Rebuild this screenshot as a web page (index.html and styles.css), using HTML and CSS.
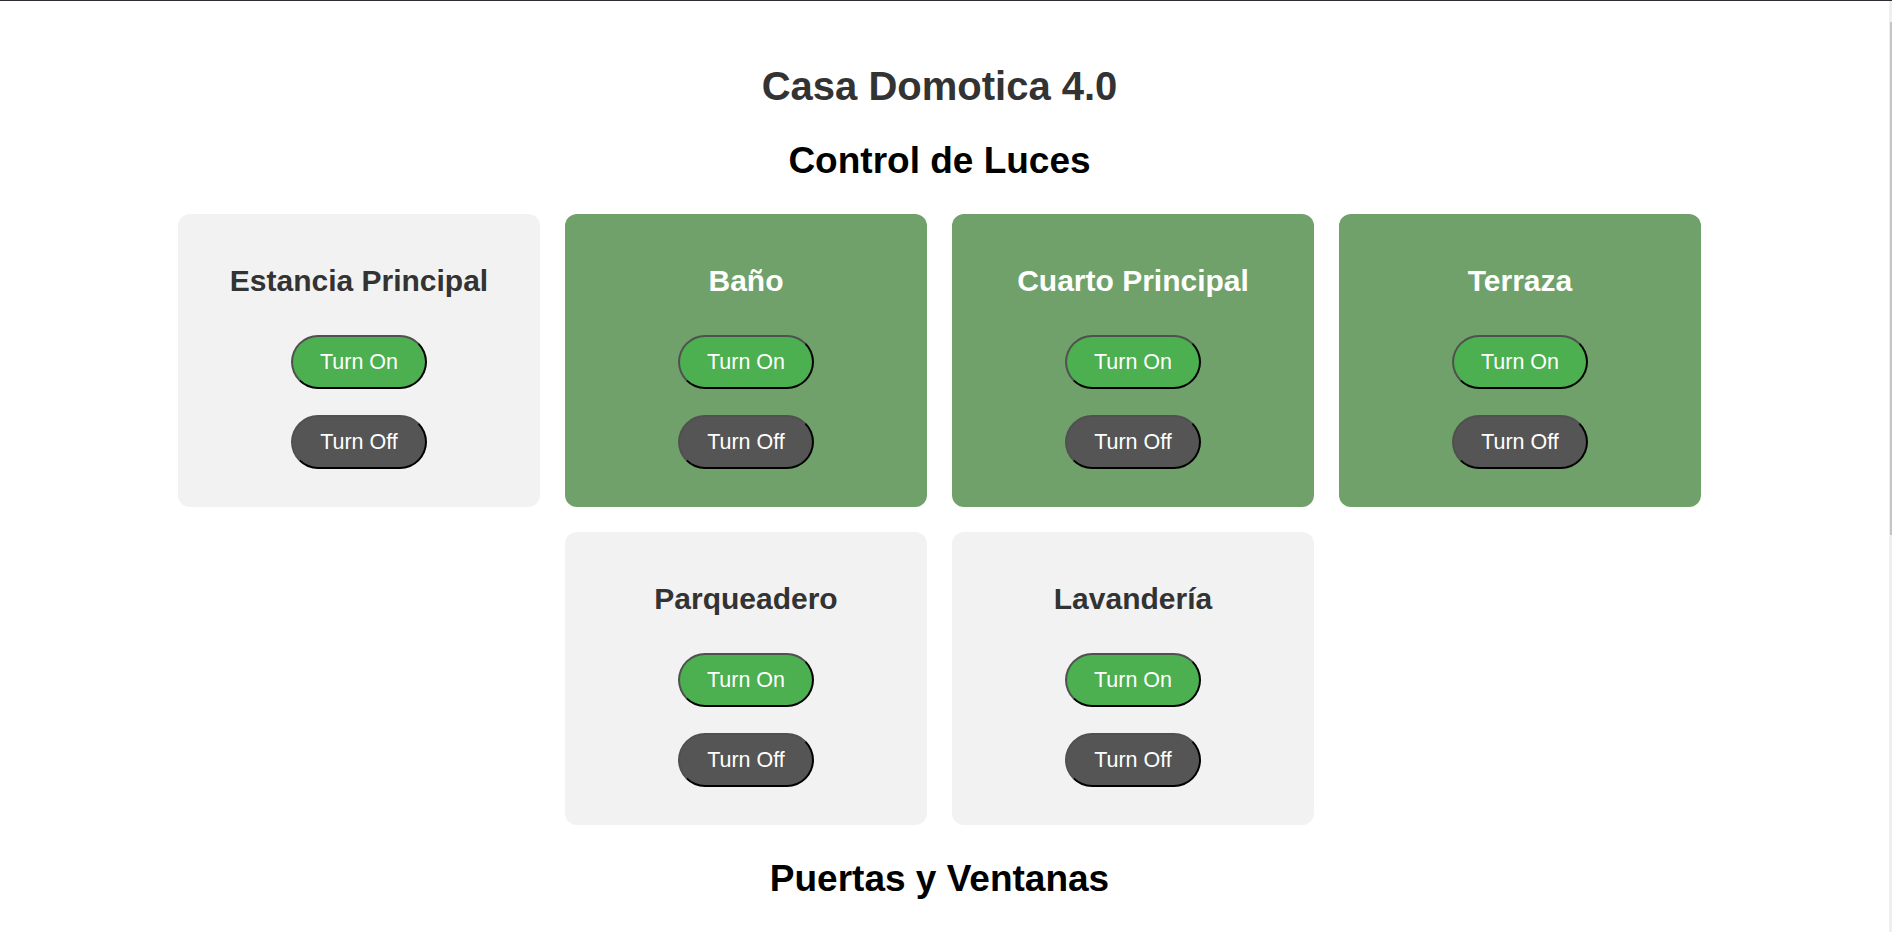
FILE: index.html
```html
<!DOCTYPE html>
<html lang="es">
<head>
<meta charset="utf-8">
<title>Casa Domotica 4.0</title>
<link rel="stylesheet" href="styles.css">
</head>
<body>
<main class="page">
  <h1 class="title">Casa Domotica 4.0</h1>

  <section class="section">
    <h2 class="section-title">Control de Luces</h2>
    <div class="cards">
      <div class="card">
        <h3 class="card-title">Estancia Principal</h3>
        <div class="actions">
          <button class="btn btn-on">Turn On</button>
          <button class="btn btn-off">Turn Off</button>
        </div>
      </div>
      <div class="card card-active">
        <h3 class="card-title">Baño</h3>
        <div class="actions">
          <button class="btn btn-on">Turn On</button>
          <button class="btn btn-off">Turn Off</button>
        </div>
      </div>
      <div class="card card-active">
        <h3 class="card-title">Cuarto Principal</h3>
        <div class="actions">
          <button class="btn btn-on">Turn On</button>
          <button class="btn btn-off">Turn Off</button>
        </div>
      </div>
      <div class="card card-active">
        <h3 class="card-title">Terraza</h3>
        <div class="actions">
          <button class="btn btn-on">Turn On</button>
          <button class="btn btn-off">Turn Off</button>
        </div>
      </div>
      <div class="card">
        <h3 class="card-title">Parqueadero</h3>
        <div class="actions">
          <button class="btn btn-on">Turn On</button>
          <button class="btn btn-off">Turn Off</button>
        </div>
      </div>
      <div class="card">
        <h3 class="card-title">Lavandería</h3>
        <div class="actions">
          <button class="btn btn-on">Turn On</button>
          <button class="btn btn-off">Turn Off</button>
        </div>
      </div>
    </div>
  </section>

  <section class="section section-next">
    <h2 class="section-title">Puertas y Ventanas</h2>
  </section>
</main>
<div class="scroll-indicator"><div class="scroll-thumb"></div></div>
</body>
</html>
```

FILE: styles.css
```css
html {
  border-top: 1px solid #2b2d33;
  background: #ffffff;
}

body {
  margin: 0;
  padding: 62px 21px 40px 8px;
  font-family: "Liberation Sans", Arial, sans-serif;
  color: #000;
}

.page {
  display: flex;
  flex-direction: column;
  align-items: center;
}

.title {
  margin: 0;
  font-size: 40px;
  line-height: 46px;
  font-weight: bold;
  color: #333333;
  text-align: center;
}

.section {
  width: 100%;
  display: flex;
  flex-direction: column;
  align-items: center;
  margin-top: 31px;
}

.section-next {
  margin-top: 33px;
}

.section-title {
  margin: 0 0 32px;
  font-size: 37px;
  line-height: 42px;
  font-weight: bold;
  color: #000;
  text-align: center;
}

.cards {
  display: flex;
  flex-wrap: wrap;
  justify-content: center;
  gap: 25px;
  width: 100%;
}

.card {
  box-sizing: border-box;
  width: 362px;
  height: 293px;
  padding: 49px 20px 38px;
  background: #f2f2f2;
  border-radius: 12px;
  text-align: center;
  color: #333333;
}

.card-active {
  background: #70a16a;
  color: #ffffff;
}

.card-title {
  margin: 0 0 37px;
  font-size: 30px;
  line-height: 35px;
  font-weight: bold;
}

.actions {
  display: flex;
  flex-direction: column;
  align-items: center;
  gap: 26px;
}

.btn {
  box-sizing: border-box;
  width: 136px;
  height: 54px;
  padding: 0;
  border: 2px solid;
  border-color: #505050 #000000 #000000 #505050;
  border-radius: 27px;
  font-family: "Liberation Sans", Arial, sans-serif;
  font-size: 21.5px;
  line-height: 25px;
  color: #ffffff;
  cursor: pointer;
}

.btn-on {
  background: #4caf50;
}

.btn-off {
  background: #555555;
}

.scroll-indicator {
  position: fixed;
  top: 1px;
  right: 0;
  width: 3px;
  height: 931px;
  background: #efefef;
}

.scroll-thumb {
  margin-top: 21px;
  margin-left: 1px;
  width: 2px;
  height: 513px;
  background: #c4c4c4;
}
```
